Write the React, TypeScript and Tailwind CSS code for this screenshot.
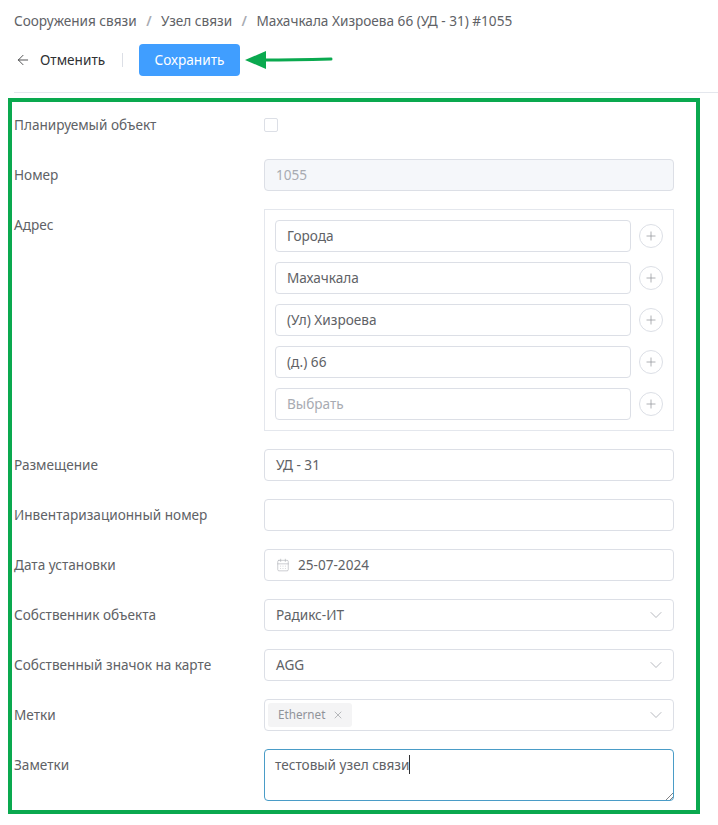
import { Plus, ChevronDown, X, ArrowLeft, CalendarDays } from 'lucide-react';

const inputBox = 'flex h-8 items-center rounded-[4px] border border-[#dcdfe6] text-[#606266]';

function Row({ label, children, className = 'mb-[18px]' }: { label: string; children: React.ReactNode; className?: string }) {
  return (
    <div className={`flex ${className}`}>
      <div className="h-8 w-[252px] shrink-0 pl-[2px] leading-8 text-[#606266]">{label}</div>
      <div className="w-[410px]">{children}</div>
    </div>
  );
}

function AddressRow({ value, placeholder }: { value: string; placeholder?: boolean }) {
  return (
    <div className="flex items-center">
      <div className={`${inputBox} w-[356px] bg-white px-[11px] ${placeholder ? 'text-[#a8abb2]' : ''}`}>{value}</div>
      <div className="ml-2 flex h-6 w-6 items-center justify-center rounded-full border border-[#dcdfe6] text-[#909399]">
        <Plus size={14} strokeWidth={1.25} />
      </div>
    </div>
  );
}

function SelectBox({ value }: { value: string }) {
  return (
    <div className={`${inputBox} justify-between bg-white pl-[11px] pr-[7px]`}>
      <span>{value}</span>
      <ChevronDown size={20} strokeWidth={1} className="text-[#a8abb2]" />
    </div>
  );
}

export default function App() {
  return (
    <div className="h-[825px] w-[718px] overflow-hidden bg-white font-['Noto_Sans',sans-serif] text-[13.6px]">
      {/* Header */}
      <div className="flex h-[42px] items-center pl-[14px] pt-[1px] text-[#606266]">
        <span>Сооружения связи</span>
        <span className="mx-[9.5px] font-semibold text-[#a8abb2]">/</span>
        <span>Узел связи</span>
        <span className="mx-[9.5px] font-semibold text-[#a8abb2]">/</span>
        <span>Махачкала Хизроева 66 (УД - 31) #1055</span>
      </div>
      <div className="ml-[14px] flex h-[51px] items-start border-b border-[#e4e7ed] pt-[2px]">
        <div className="flex h-8 w-[92px] items-center text-[#303133]">
          <ArrowLeft size={16} strokeWidth={1.25} className="ml-[1px]" />
          <span className="ml-[9px]">Отменить</span>
        </div>
        <div className="ml-[16px] mr-[16px] mt-[9px] h-[14px] w-px bg-[#dcdfe6]" />
        <button className="h-8 w-[101px] rounded-[4px] bg-[#409eff] text-white">Сохранить</button>
        <svg width="92" height="32" viewBox="0 0 92 32" className="ml-[3px]">
          <path d="M2 16 L23 7 L23 25 Z" fill="#0aa94f" />
          <path d="M20 16 Q50 16 88 15" stroke="#0aa94f" strokeWidth="3" strokeLinecap="round" fill="none" />
        </svg>
      </div>

      {/* Form */}
      <div className="ml-2 mt-[5px] h-[716px] w-[692px] border-4 border-[#0aa94f] pt-[7px]">
        <Row label="Планируемый объект">
          <div className="flex h-8 items-center">
            <div className="h-[14px] w-[14px] rounded-[2px] border border-[#dcdfe6] bg-white" />
          </div>
        </Row>
        <Row label="Номер">
          <div className={`${inputBox} bg-[#f5f7fa] px-[11px] text-[#a8abb2]`}>1055</div>
        </Row>
        <Row label="Адрес">
          <div className="flex h-[222px] flex-col justify-between border border-[#e4e7ed] p-[10px]">
            <AddressRow value="Города" />
            <AddressRow value="Махачкала" />
            <AddressRow value="(Ул) Хизроева" />
            <AddressRow value="(д.) 66" />
            <AddressRow value="Выбрать" placeholder />
          </div>
        </Row>
        <Row label="Размещение">
          <div className={`${inputBox} px-[11px]`}>УД - 31</div>
        </Row>
        <Row label="Инвентаризационный номер">
          <div className={inputBox} />
        </Row>
        <Row label="Дата установки">
          <div className={`${inputBox} px-[11px]`}>
            <CalendarDays size={14} strokeWidth={1} className="text-[#a8abb2]" />
            <span className="ml-2">25-07-2024</span>
          </div>
        </Row>
        <Row label="Собственник объекта">
          <SelectBox value="Радикс-ИТ" />
        </Row>
        <Row label="Собственный значок на карте">
          <SelectBox value="AGG" />
        </Row>
        <Row label="Метки">
          <div className={`${inputBox} justify-between pl-[3px] pr-[7px]`}>
            <div className="flex h-6 items-center rounded-[3px] bg-[#f4f4f5] pl-[10px] pr-[8px] text-[11.7px] text-[#909399]">
              Ethernet
              <X size={12} strokeWidth={1.25} className="ml-[7px]" />
            </div>
            <ChevronDown size={20} strokeWidth={1} className="text-[#a8abb2]" />
          </div>
        </Row>
        <Row label="Заметки" className="">
          <div className="relative h-[52px] rounded-[4px] border border-[#4a9cc7] px-[10px] py-[4px] leading-[22px] text-[#606266]">
            <span className="border-r border-[#303133]">тестовый узел связи</span>
            <svg width="8" height="8" viewBox="0 0 8 8" className="absolute bottom-0 right-0">
              <path d="M1 8 L8 1 M5 8 L8 5" stroke="#606266" strokeWidth="0.8" />
            </svg>
          </div>
        </Row>
      </div>
    </div>
  );
}
